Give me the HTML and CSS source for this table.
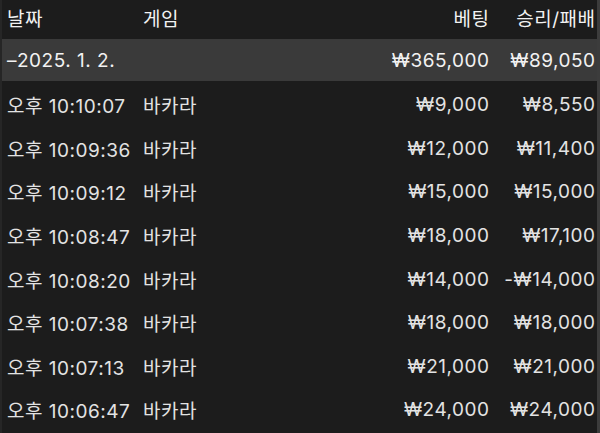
FILE: index.html
```html
<!DOCTYPE html>
<html lang="ko">
<head>
    <meta charset="UTF-8">
    <meta name="viewport" content="width=device-width, initial-scale=1.0">
    <title>베팅 내역</title>
    <link rel="stylesheet" href="styles.css">
</head>
<body>
    <div class="history">
        <div class="row head">
            <span>날짜</span>
            <span>게임</span>
            <span class="num">베팅</span>
            <span class="num">승리/패배</span>
        </div>

        <div class="row group">
            <span class="date">–2025. 1. 2.</span>
            <span></span>
            <span class="num">₩365,000</span>
            <span class="num">₩89,050</span>
        </div>

        <div class="row first">
            <span>오후 10:10:07</span>
            <span>바카라</span>
            <span class="num">₩9,000</span>
            <span class="num">₩8,550</span>
        </div>
        <div class="row">
            <span>오후 10:09:36</span>
            <span>바카라</span>
            <span class="num">₩12,000</span>
            <span class="num">₩11,400</span>
        </div>
        <div class="row">
            <span>오후 10:09:12</span>
            <span>바카라</span>
            <span class="num">₩15,000</span>
            <span class="num">₩15,000</span>
        </div>
        <div class="row">
            <span>오후 10:08:47</span>
            <span>바카라</span>
            <span class="num">₩18,000</span>
            <span class="num">₩17,100</span>
        </div>
        <div class="row">
            <span>오후 10:08:20</span>
            <span>바카라</span>
            <span class="num">₩14,000</span>
            <span class="num">-₩14,000</span>
        </div>
        <div class="row">
            <span>오후 10:07:38</span>
            <span>바카라</span>
            <span class="num">₩18,000</span>
            <span class="num">₩18,000</span>
        </div>
        <div class="row">
            <span>오후 10:07:13</span>
            <span>바카라</span>
            <span class="num">₩21,000</span>
            <span class="num">₩21,000</span>
        </div>
        <div class="row">
            <span>오후 10:06:47</span>
            <span>바카라</span>
            <span class="num">₩24,000</span>
            <span class="num">₩24,000</span>
        </div>
    </div>
</body>
</html>
```

FILE: styles.css
```css
html, body {
    margin: 0;
    padding: 0;
    background: #1c1c1c;
}
body {
    font-family: Inter, "Noto Sans CJK KR", sans-serif;
    font-size: 19px;
    letter-spacing: 0.5px;
    color: #e3e3e3;
    height: 433px;
    overflow: hidden;
}
.history {
    height: 433px;
    border-left: 2px solid #262626;
    border-right: 3px solid #3c3c3c;
    box-sizing: border-box;
}
.row {
    display: grid;
    grid-template-columns: 136px 1fr 120px 106px;
    align-items: center;
    height: 43.6px;
    padding: 0 2px 0 5px;
    white-space: nowrap;
}
.row .num {
    text-align: right;
    margin-right: -0.5px;
}
.head {
    height: 39px;
    padding-bottom: 5px;
    box-sizing: border-box;
    color: #f2f2f2;
}
.group {
    height: 42px;
    background: #3a3a3a;
    color: #f2f2f2;
}
.first {
    margin-top: 2px;
}
```
